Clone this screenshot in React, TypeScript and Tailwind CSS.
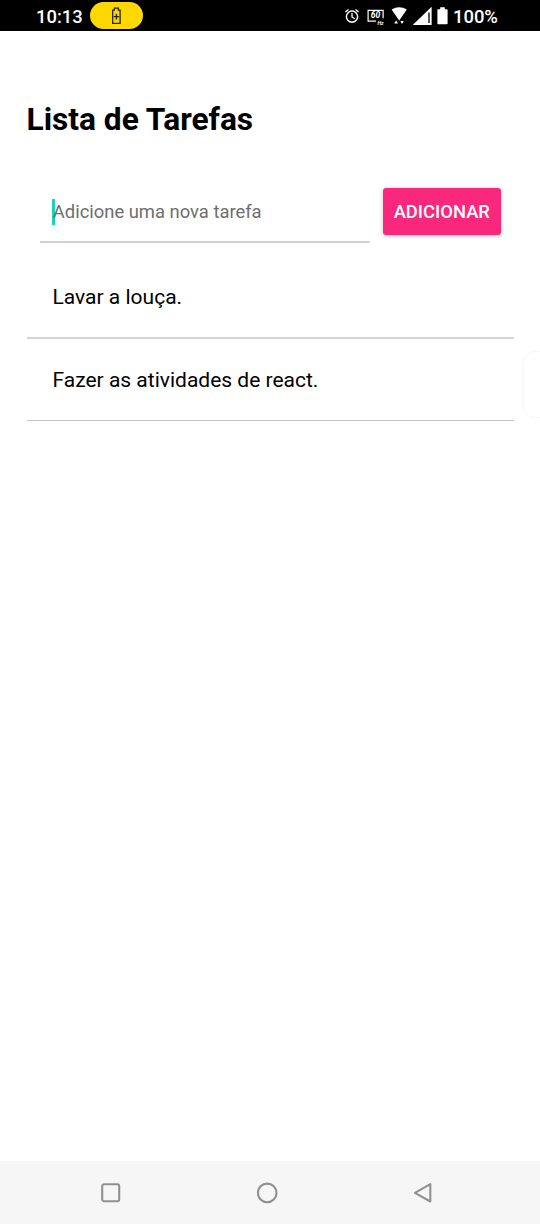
import React from "react";

const tasks = ["Lavar a louça.", "Fazer as atividades de react."];

function StatusBar() {
  return (
    <header className="flex h-[31px] shrink-0 items-center bg-black pl-[36px] pr-[42px] text-[18.4px] leading-[31px] font-medium text-white">
      <span className="mt-[2px] w-[54px] whitespace-nowrap">10:13</span>
      <span className="flex h-[27px] w-[52.5px] items-center justify-center rounded-full bg-[#ffd800]">
        <svg width="12" height="18" viewBox="0 0 12 18" fill="none" stroke="#292508" strokeWidth="1.3">
          <path d="M4.4 3.1V1.1h4v2h1.7v13.2H2.7V3.1z" />
          <path d="M6.4 6.8v5.6M3.7 9.6h5.4" strokeWidth="1.4" />
        </svg>
      </span>
      <svg className="ml-auto shrink-0" width="106" height="31" viewBox="0 0 106 31" fill="none" stroke="white">
        <circle cx="10" cy="16.6" r="5.6" strokeWidth="1.4" />
        <path d="M10 13v4l2.8 1.7M3.4 12.1l3.1-2.7M13.5 9.4l3.1 2.7" strokeWidth="1.3" />
        <path d="M34 21.2h-7.9V10.4h15v7.8" strokeWidth="1.2" />
        <text x="28.8" y="18.2" fill="white" stroke="none" fontSize="8.5" fontWeight="700" fontStyle="italic" fontFamily="Roboto, sans-serif">60</text>
        <text x="35.4" y="25" fill="white" stroke="none" fontSize="5.2" fontWeight="700" fontStyle="italic" fontFamily="Roboto, sans-serif">Hz</text>
        <path d="M49.6 9.4q7.6-4.2 15.2 0l-7.6 11z" fill="white" stroke="none" />
        <path d="M54.1 20.6l-1.9 3h3.8zM58.3 21h3.6L60 23.9z" fill="white" stroke="none" />
        <path d="M89.6 6.7v18.2H70.7z" fill="white" stroke="none" />
        <path d="M87 12.5v10.5" stroke="black" strokeWidth="1.3" />
        <path d="M98.2 7.2h4.6v2h2q.8 0 .8.8v13.4q0 .8-.8.8h-8.6q-.8 0-.8-.8V10q0-.8.8-.8h2z" fill="white" stroke="none" />
      </svg>
      <span className="mt-[2px] ml-[5px] w-[45px] whitespace-nowrap">100%</span>
    </header>
  );
}

function NavigationBar() {
  return (
    <nav className="flex h-[63px] shrink-0 items-center justify-between bg-[#f6f6f6] pr-[105px] pl-[100px] text-[#909090]">
      <svg width="22" height="22" viewBox="0 0 22 22" fill="none" stroke="currentColor" strokeWidth="2.1">
        <rect x="2.2" y="2.2" width="17" height="17" rx="2" />
      </svg>
      <svg width="22" height="22" viewBox="0 0 22 22" fill="none" stroke="currentColor" strokeWidth="2.1">
        <circle cx="10.2" cy="10.9" r="9.3" />
      </svg>
      <svg width="22" height="22" viewBox="0 0 22 22" fill="none" stroke="currentColor" strokeWidth="2.1" strokeLinejoin="round">
        <path d="M17.3 2.1v17.4L1.9 10.8z" />
      </svg>
    </nav>
  );
}

export default function App() {
  return (
    <div className="relative flex h-[1224px] w-[540px] flex-col overflow-hidden bg-white font-['Roboto',sans-serif] text-black">
      <StatusBar />
      <main className="flex flex-1 flex-col px-[26.5px]">
        <h1 className="mt-[70px] h-[38px] text-[31.7px] leading-[38px] font-bold whitespace-nowrap">Lista de Tarefas</h1>
        <form className="mt-[42px] flex h-[62px] items-start px-[13px]" onSubmit={(e) => e.preventDefault()}>
          <div className="flex h-[62px] w-[330.5px] items-center border-b-2 border-[#d2d2d2] px-[12.5px] pt-[2px]">
            <span className="h-[26px] w-[2.5px] bg-[#19d3bd]" />
            <input
              className="-ml-[1.7px] w-[290px] bg-transparent text-[18.4px] leading-6 outline-none placeholder:text-[#6e6e6e]"
              placeholder="Adicione uma nova tarefa"
              aria-label="Adicione uma nova tarefa"
            />
          </div>
          <button className="mt-[7px] ml-[13.5px] h-[46.5px] w-[117.5px] rounded-[3px] bg-[#f9287c] pt-[2px] text-[18.4px] leading-none font-medium whitespace-nowrap text-white shadow-[0_1px_5px_rgba(0,0,0,0.22)]">
            ADICIONAR
          </button>
        </form>
        <ul className="mt-[13px]">
          {tasks.map((task) => (
            <li key={task} className="flex h-[82px] items-center border-b border-[#c6c6c6] pt-px pl-[26px] text-[21px] leading-[28px] whitespace-nowrap first:h-[83px] first:border-b-2 first:border-[#d4d4d4]">
              {task}
            </li>
          ))}
        </ul>
      </main>
      <NavigationBar />
      <div className="absolute top-[351px] left-[522.5px] h-[67px] w-[28px] rounded-[12px] border border-[#f7f7f7]" />
    </div>
  );
}
